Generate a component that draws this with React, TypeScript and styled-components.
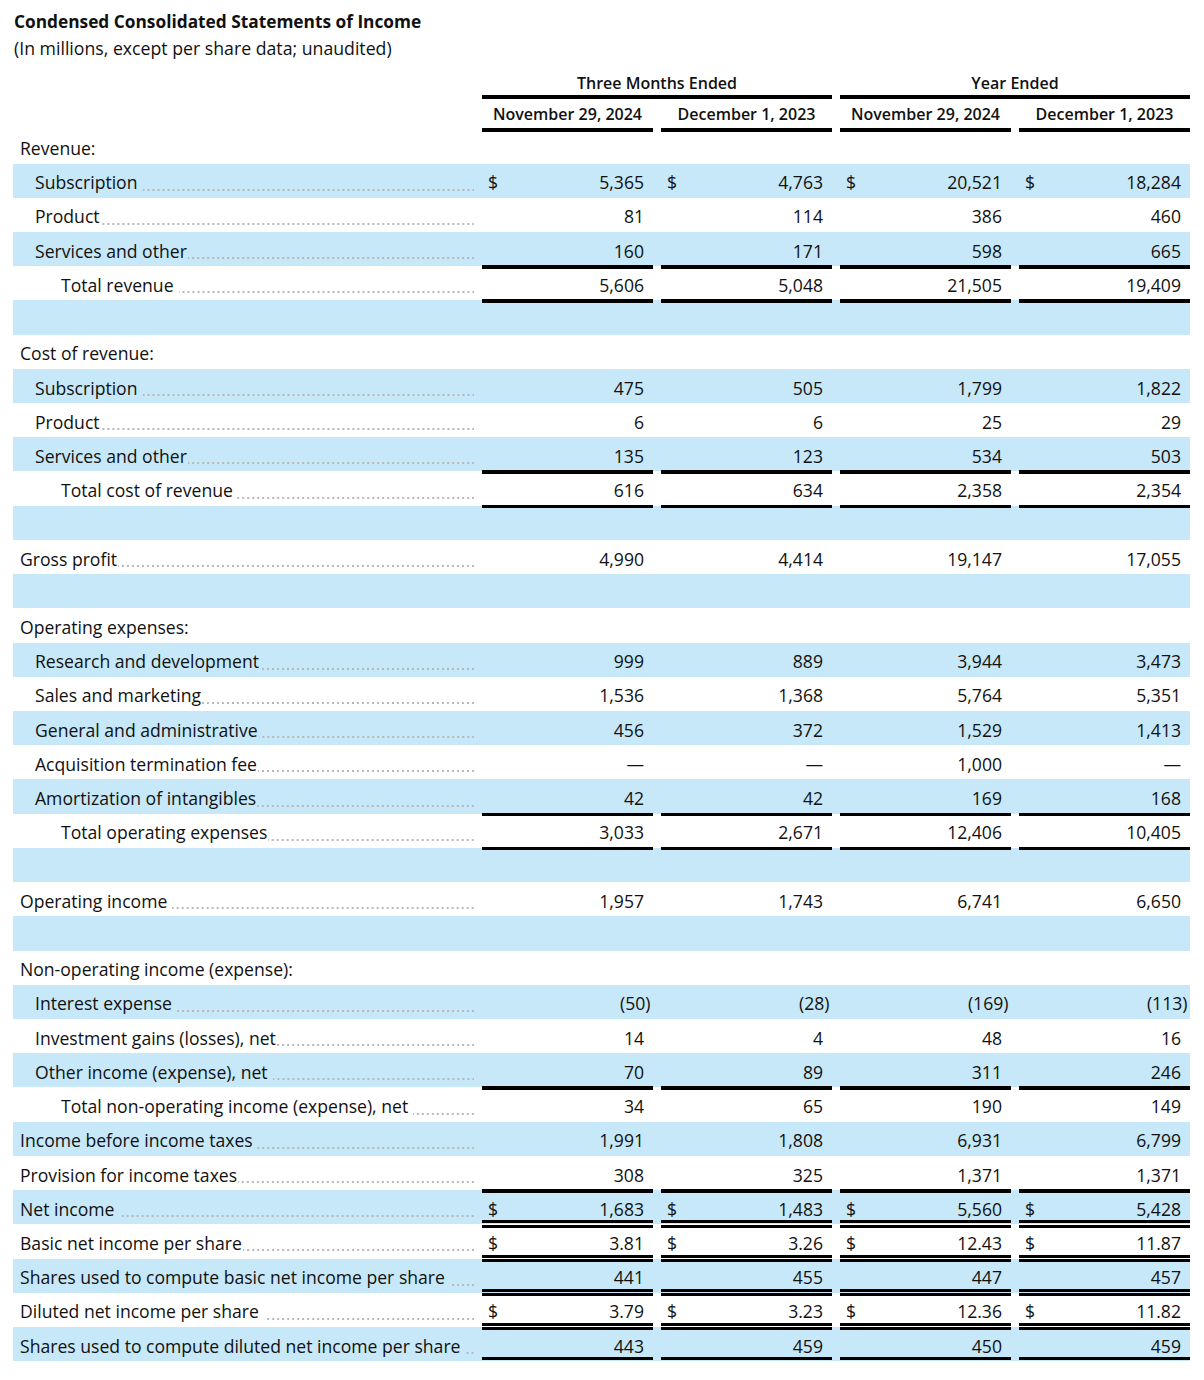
import React from "react";
import styled, { createGlobalStyle, css } from "styled-components";

const GlobalStyle = createGlobalStyle`
  html, body {
    margin: 0;
    padding: 0;
    background: #ffffff;
  }
  body {
    font-family: "Open Sans", "Noto Sans", sans-serif;
    color: #111111;
    -webkit-font-smoothing: antialiased;
  }
`;

const SHADE = "#c6e8f8";
const ROW_H = 34.23;
const GRID = "461px repeat(4, 171px)";

type RuleKind = "single" | "double" | undefined;

type Line = {
  label?: string;
  level?: 0 | 1 | 2;
  kind: "section" | "line" | "blank";
  values?: string[];
  dollar?: boolean;
  rule?: RuleKind;
  spaced?: boolean;
};

const lines: Line[] = [
  { kind: "section", label: "Revenue:" },
  { kind: "line", level: 1, label: "Subscription", spaced: true, dollar: true, values: ["5,365", "4,763", "20,521", "18,284"] },
  { kind: "line", level: 1, label: "Product", values: ["81", "114", "386", "460"] },
  { kind: "line", level: 1, label: "Services and other", values: ["160", "171", "598", "665"], rule: "single" },
  { kind: "line", level: 2, label: "Total revenue", spaced: true, values: ["5,606", "5,048", "21,505", "19,409"], rule: "single" },
  { kind: "blank" },
  { kind: "section", label: "Cost of revenue:" },
  { kind: "line", level: 1, label: "Subscription", spaced: true, values: ["475", "505", "1,799", "1,822"] },
  { kind: "line", level: 1, label: "Product", values: ["6", "6", "25", "29"] },
  { kind: "line", level: 1, label: "Services and other", values: ["135", "123", "534", "503"], rule: "single" },
  { kind: "line", level: 2, label: "Total cost of revenue", values: ["616", "634", "2,358", "2,354"], rule: "single" },
  { kind: "blank" },
  { kind: "line", level: 0, label: "Gross profit", values: ["4,990", "4,414", "19,147", "17,055"] },
  { kind: "blank" },
  { kind: "section", label: "Operating expenses:" },
  { kind: "line", level: 1, label: "Research and development", values: ["999", "889", "3,944", "3,473"] },
  { kind: "line", level: 1, label: "Sales and marketing", values: ["1,536", "1,368", "5,764", "5,351"] },
  { kind: "line", level: 1, label: "General and administrative", values: ["456", "372", "1,529", "1,413"] },
  { kind: "line", level: 1, label: "Acquisition termination fee", values: ["—", "—", "1,000", "—"] },
  { kind: "line", level: 1, label: "Amortization of intangibles", values: ["42", "42", "169", "168"], rule: "single" },
  { kind: "line", level: 2, label: "Total operating expenses", values: ["3,033", "2,671", "12,406", "10,405"], rule: "single" },
  { kind: "blank" },
  { kind: "line", level: 0, label: "Operating income", spaced: true, values: ["1,957", "1,743", "6,741", "6,650"] },
  { kind: "blank" },
  { kind: "section", label: "Non-operating income (expense):" },
  { kind: "line", level: 1, label: "Interest expense", spaced: true, values: ["(50)", "(28)", "(169)", "(113)"] },
  { kind: "line", level: 1, label: "Investment gains (losses), net", values: ["14", "4", "48", "16"] },
  { kind: "line", level: 1, label: "Other income (expense), net", spaced: true, values: ["70", "89", "311", "246"], rule: "single" },
  { kind: "line", level: 2, label: "Total non-operating income (expense), net", spaced: true, values: ["34", "65", "190", "149"] },
  { kind: "line", level: 0, label: "Income before income taxes", values: ["1,991", "1,808", "6,931", "6,799"] },
  { kind: "line", level: 0, label: "Provision for income taxes", values: ["308", "325", "1,371", "1,371"], rule: "single" },
  { kind: "line", level: 0, label: "Net income", spaced: true, dollar: true, values: ["1,683", "1,483", "5,560", "5,428"], rule: "double" },
  { kind: "line", level: 0, label: "Basic net income per share", dollar: true, values: ["3.81", "3.26", "12.43", "11.87"], rule: "double" },
  { kind: "line", level: 0, label: "Shares used to compute basic net income per share", spaced: true, values: ["441", "455", "447", "457"], rule: "double" },
  { kind: "line", level: 0, label: "Diluted net income per share", spaced: true, dollar: true, values: ["3.79", "3.23", "12.36", "11.82"], rule: "double" },
  { kind: "line", level: 0, label: "Shares used to compute diluted net income per share", spaced: true, values: ["443", "459", "450", "459"], rule: "double" },
];

const Page = styled.main`
  padding: 9px 14px 0 13px;
  width: 1177px;
`;

const Title = styled.h1`
  margin: 0;
  padding-left: 1px;
  font-size: 17.3px;
  font-weight: 700;
  line-height: 26px;
`;

const Subtitle = styled.p`
  margin: 0;
  padding-left: 1px;
  font-size: 17.7px;
  font-weight: 400;
  line-height: 26px;
`;

const ruleCss = css<{ $rule?: RuleKind }>`
  position: relative;
  ${({ $rule }) =>
    $rule === "single" &&
    css`
      &::after {
        content: "";
        position: absolute;
        left: 0;
        right: 0;
        bottom: -2.5px;
        height: 3.5px;
        background: #000;
      }
    `}
  ${({ $rule }) =>
    $rule === "double" &&
    css`
      &::after {
        content: "";
        position: absolute;
        left: 0;
        right: 0;
        bottom: -3.5px;
        height: 1.5px;
        border-top: 3px solid #000;
        border-bottom: 3px solid #000;
      }
    `}
`;

const HeaderGrid = styled.div<{ $top?: boolean }>`
  display: grid;
  grid-template-columns: ${GRID};
  column-gap: 8px;
  height: ${({ $top }) => ($top ? "35px" : "33.3px")};
`;

const HeaderCell = styled.div<{ $span?: number; $top?: boolean; $rule?: RuleKind }>`
  grid-column: span ${({ $span }) => $span ?? 1};
  text-align: center;
  font-size: 16px;
  font-weight: 600;
  line-height: 22px;
  padding-top: ${({ $top }) => ($top ? "11px" : "7px")};
  white-space: nowrap;
  ${ruleCss}
`;

const Body = styled.div``;

const Row = styled.div`
  display: grid;
  grid-template-columns: ${GRID};
  column-gap: 8px;
  height: ${ROW_H}px;
  font-size: 17.6px;
  line-height: 24px;

  &:nth-child(even) {
    background: ${SHADE};
  }
`;

const LabelCell = styled.div<{ $level: number }>`
  display: flex;
  min-width: 0;
  padding-top: 6.7px;
  padding-left: ${({ $level }) => ($level === 2 ? 48 : $level === 1 ? 22 : 7)}px;
  white-space: nowrap;
`;

const LabelText = styled.span`
  flex: none;
`;

const Leader = styled.span<{ $spaced?: boolean }>`
  flex: 1;
  height: 24px;
  margin-left: ${({ $spaced }) => ($spaced ? "5px" : "1px")};
  background-image: linear-gradient(to right, transparent 0 3px, #b8b8b8 3px 5px);
  background-size: 5px 2px;
  background-repeat: repeat-x;
  background-position: right 0 top 18.5px;
`;

const ValueCell = styled.div<{ $rule?: RuleKind }>`
  display: flex;
  justify-content: space-between;
  padding: 6.7px 9px 0 6px;
  white-space: nowrap;
  ${ruleCss}
`;

const Dollar = styled.span``;

const Amount = styled.span`
  margin-left: auto;
`;

const Hang = styled.span`
  margin-right: -6.5px;
`;

function renderAmount(v: string) {
  if (v.startsWith("(") && v.endsWith(")")) {
    return (
      <Amount>
        {v.slice(0, -1)}
        <Hang>)</Hang>
      </Amount>
    );
  }
  return <Amount>{v}</Amount>;
}

function EmptyValues() {
  return (
    <>
      <ValueCell />
      <ValueCell />
      <ValueCell />
      <ValueCell />
    </>
  );
}

function StatementRow({ line }: { line: Line }) {
  if (line.kind === "blank") {
    return (
      <Row>
        <LabelCell $level={0} />
        <EmptyValues />
      </Row>
    );
  }
  if (line.kind === "section") {
    return (
      <Row>
        <LabelCell $level={0}>
          <LabelText>{line.label}</LabelText>
        </LabelCell>
        <EmptyValues />
      </Row>
    );
  }
  return (
    <Row>
      <LabelCell $level={line.level ?? 0}>
        <LabelText>{line.label}</LabelText>
        <Leader $spaced={line.spaced} />
      </LabelCell>
      {(line.values ?? []).map((v, i) => (
        <ValueCell key={i} $rule={line.rule}>
          {line.dollar && <Dollar>$</Dollar>}
          {renderAmount(v)}
        </ValueCell>
      ))}
    </Row>
  );
}

export default function App() {
  return (
    <Page>
      <GlobalStyle />
      <Title>Condensed Consolidated Statements of Income</Title>
      <Subtitle>(In millions, except per share data; unaudited)</Subtitle>
      <HeaderGrid $top>
        <div />
        <HeaderCell $span={2} $top $rule="single">
          Three Months Ended
        </HeaderCell>
        <HeaderCell $span={2} $top $rule="single">
          Year Ended
        </HeaderCell>
      </HeaderGrid>
      <HeaderGrid>
        <div />
        <HeaderCell $rule="single">November 29, 2024</HeaderCell>
        <HeaderCell $rule="single">December 1, 2023</HeaderCell>
        <HeaderCell $rule="single">November 29, 2024</HeaderCell>
        <HeaderCell $rule="single">December 1, 2023</HeaderCell>
      </HeaderGrid>
      <Body>
        {lines.map((line, i) => (
          <StatementRow key={i} line={line} />
        ))}
      </Body>
    </Page>
  );
}
